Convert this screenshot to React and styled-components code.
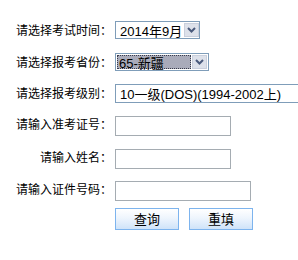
import React from 'react'
import styled, { createGlobalStyle } from 'styled-components'

const Global = createGlobalStyle`
    html, body {
        margin: 0;
        padding: 0;
        background: #fff;
    }
    body {
        width: 298px;
        height: 260px;
        overflow: hidden;
        font-family: "Noto Sans CJK SC", "Liberation Sans", sans-serif;
    }
`

const Form = styled.div`
    display: grid;
    grid-template-columns: 112px 1fr;
    grid-template-rows: 32px 32px 30px 32px 33px 32px 28px;
    column-gap: 3px;
    align-items: center;
    padding-top: 14px;
    width: 298px;
`

const Label = styled.div`
    text-align: right;
    white-space: nowrap;
    font-size: 12px;
    line-height: 14px;
    color: #000;
`

// $cut: the box runs past the window edge, so no right border shows
const Select = styled.div`
    display: flex;
    align-items: stretch;
    box-sizing: border-box;
    width: ${p => p.$w}px;
    height: ${p => p.$h || 18}px;
    border: 1px solid #7f9db9;
    border-right: ${p => (p.$cut ? 'none' : '1px solid #7f9db9')};
    background: #fff;
    padding: 1px;
    gap: 1px;
    white-space: nowrap;
    overflow: hidden;
`

const Value = styled.div`
    flex: 1;
    display: flex;
    align-items: center;
    padding-left: ${p => (p.$active ? 1 : 2)}px;
    font-family: "Liberation Sans", "Noto Sans CJK SC", sans-serif;
    font-size: 13px;
    color: #000;
    background: ${p => (p.$active ? '#a9abba' : 'transparent')};
    border: 1px ${p => (p.$active ? 'dotted #3a3c4c' : 'solid transparent')};
    box-sizing: border-box;
`

const Arrow = styled.div`
    width: 15px;
    flex: none;
    display: flex;
    align-items: center;
    justify-content: center;
    background: #dde1ea;
    border: 1px solid #c9cfdc;
    box-sizing: border-box;
`

const Input = styled.input`
    box-sizing: border-box;
    width: ${p => p.$w}px;
    height: 20px;
    border: 1px solid #a5acb2;
    background: #fff;
    padding: 0 2px;
    margin: 0;
    outline: none;
`

const Buttons = styled.div`
    display: flex;
    gap: 10px;
`

const Button = styled.button`
    box-sizing: border-box;
    width: 64px;
    height: 22px;
    border: 1px solid #7db4ee;
    background: linear-gradient(#ffffff 0%, #eef5fd 45%, #cfe3f9 100%);
    font-family: "Noto Sans CJK SC", sans-serif;
    font-size: 13px;
    line-height: 18px;
    color: #000;
    padding: 0;
    margin: 0;
`

const Chevron = () => (
    <svg width="9" height="6" viewBox="0 0 9 6">
        <path d="M1 1 L4.5 4.5 L8 1" fill="none" stroke="#4a5a7c" strokeWidth="2" />
    </svg>
)

const App = () => {
    return (
        <>
            <Global />
            <Form>
                <Label>请选择考试时间：</Label>
                <Select $w={85}>
                    <Value>2014年9月</Value>
                    <Arrow><Chevron /></Arrow>
                </Select>

                <Label>请选择报考省份：</Label>
                <Select $w={94}>
                    <Value $active>65-新疆</Value>
                    <Arrow><Chevron /></Arrow>
                </Select>

                <Label>请选择报考级别：</Label>
                <Select $w={183} $h={19} $cut>
                    <Value>10一级(DOS)(1994-2002上)</Value>
                </Select>

                <Label>请输入准考证号：</Label>
                <div><Input $w={116} /></div>

                <Label>请输入姓名：</Label>
                <div><Input $w={116} /></div>

                <Label>请输入证件号码：</Label>
                <div><Input $w={136} /></div>

                <div />
                <Buttons>
                    <Button>查询</Button>
                    <Button>重填</Button>
                </Buttons>
            </Form>
        </>
    )
}

export default App
